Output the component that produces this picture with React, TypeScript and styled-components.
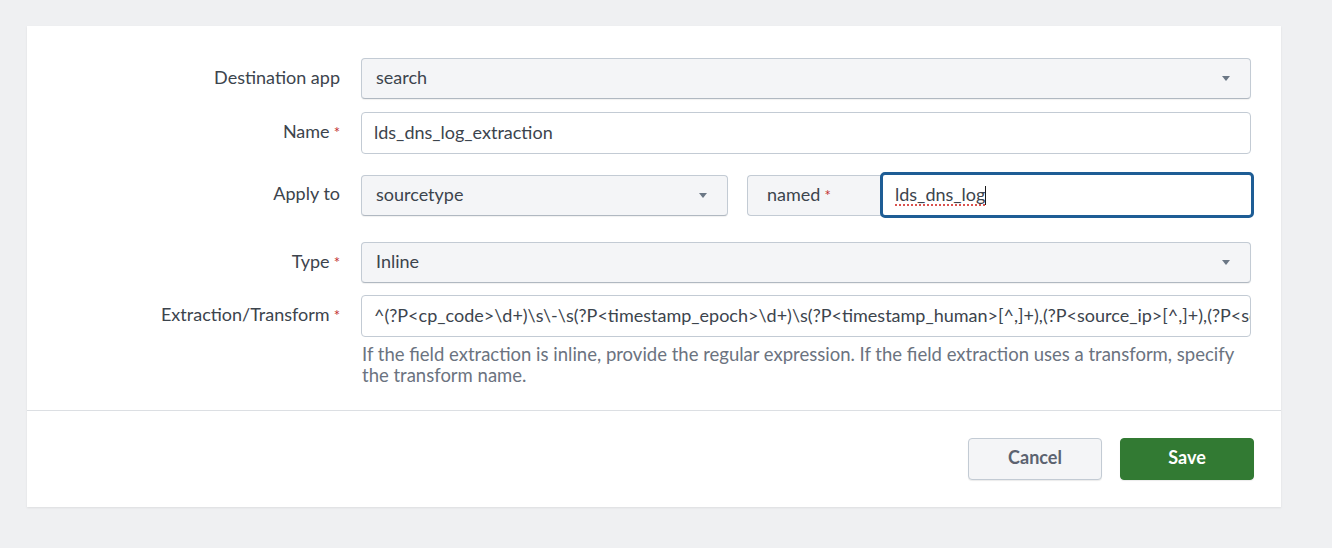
import styled, { createGlobalStyle } from 'styled-components'

const GlobalStyle = createGlobalStyle`
  html, body {
    margin: 0;
    padding: 0;
    background: #eff0f2;
    font-family: Lato, "Open Sans", "Liberation Sans", sans-serif;
    color: #3c444d;
  }
  * { box-sizing: border-box; }
`

const Page = styled.div`
  width: 1332px;
  height: 548px;
  padding: 26px 51px 0 27px;
`

const Card = styled.div`
  background: #fff;
  box-shadow: 0 1px 2px rgba(0, 0, 0, 0.08);
`

const Form = styled.div`
  padding: 32px 30px 0 0;
  height: 384px;
`

const Row = styled.div<{ $top?: number }>`
  display: grid;
  grid-template-columns: 313px minmax(0, 1fr);
  column-gap: 21px;
  align-items: start;
  margin-top: ${p => p.$top ?? 0}px;
`

const Label = styled.label<{ $offset?: number }>`
  text-align: right;
  font-size: 18px;
  line-height: 39px;
  padding-top: ${p => p.$offset ?? 0}px;
  color: #3c444d;
  white-space: nowrap;
`

const Req = styled.span`
  color: #c22f2f;
  margin-left: 4px;
  font-size: 15px;
`

const Select = styled.div<{ $width?: number }>`
  position: relative;
  height: 41px;
  width: ${p => (p.$width ? `${p.$width}px` : '100%')};
  background: #f4f5f7;
  border: 1px solid #c3cbd4;
  border-bottom-color: #b0b8c1;
  border-radius: 4px;
  padding: 0 14px;
  font-size: 18px;
  line-height: 36px;
  color: #3c444d;
  box-shadow: 0 1px 1px rgba(0, 0, 0, 0.06);
`

const Caret = styled.span`
  position: absolute;
  right: 20px;
  top: 17px;
  width: 0;
  height: 0;
  border-left: 4px solid transparent;
  border-right: 4px solid transparent;
  border-top: 5px solid #6b7785;
`

const Input = styled.div`
  height: 42px;
  width: 100%;
  min-width: 0;
  background: #fff;
  border: 1px solid #c3cbd4;
  border-radius: 4px;
  padding: 0 13px 0 12px;
  font-size: 18px;
  line-height: 38px;
  color: #3c444d;
  white-space: nowrap;
  overflow: hidden;
`

const ApplyGroup = styled.div`
  display: flex;
  align-items: center;
`

const NamedBox = styled.div`
  margin-left: 19px;
  height: 41px;
  width: 140px;
  background: #f4f5f7;
  border: 1px solid #c3cbd4;
  border-right: none;
  border-radius: 4px 0 0 4px;
  padding: 0 0 0 19px;
  font-size: 18px;
  line-height: 36px;
  color: #3c444d;
`

const FocusInput = styled.div`
  flex: 1;
  height: 46px;
  margin-right: -3px;
  margin-left: -7px;
  background: #fff;
  border: 3px solid #1e5d95;
  border-radius: 5px;
  padding: 0 12px;
  font-size: 18px;
  line-height: 38px;
  color: #3c444d;
`

const Misspelled = styled.span`
  text-decoration: underline dotted #d9534f;
  text-decoration-thickness: 2px;
  text-underline-offset: 3px;
`

const Cursor = styled.span`
  display: inline-block;
  width: 1px;
  height: 19px;
  background: #1a1a1a;
  vertical-align: -4px;
`

const Help = styled.div`
  margin-top: 7px;
  font-size: 18.5px;
  line-height: 21px;
  color: #6b7380;
  padding-left: 1px;
`

const Footer = styled.div`
  border-top: 1px solid #dcdfe3;
  height: 97px;
  display: flex;
  justify-content: flex-end;
  align-items: flex-start;
  padding: 27px 27px 0 0;
  gap: 18px;
`

const Button = styled.button<{ $primary?: boolean }>`
  width: 134px;
  height: 42px;
  padding: 0 0 4px;
  border-radius: 4px;
  font-family: Lato, "Open Sans", "Liberation Sans", sans-serif;
  font-weight: 700;
  font-size: 18px;
  cursor: pointer;
  background: ${p => (p.$primary ? '#327a33' : '#f4f5f7')};
  color: ${p => (p.$primary ? '#fff' : '#5c6370')};
  border: 1px solid ${p => (p.$primary ? '#327a33' : '#c3cbd4')};
  box-shadow: 0 1px 1px rgba(0, 0, 0, 0.08);
`

export default function App() {
  return (
    <Page>
      <GlobalStyle />
      <Card>
        <Form>
          <Row>
            <Label>Destination app</Label>
            <Select>
              search
              <Caret />
            </Select>
          </Row>
          <Row $top={13}>
            <Label>
              Name<Req>*</Req>
            </Label>
            <Input>lds_dns_log_extraction</Input>
          </Row>
          <Row $top={18}>
            <Label $offset={2}>Apply to</Label>
            <ApplyGroup>
              <Select $width={367}>
                sourcetype
                <Caret />
              </Select>
              <NamedBox>
                named<Req>*</Req>
              </NamedBox>
              <FocusInput>
                <Misspelled>lds_dns_log</Misspelled>
                <Cursor />
              </FocusInput>
            </ApplyGroup>
          </Row>
          <Row $top={24}>
            <Label>
              Type<Req>*</Req>
            </Label>
            <Select>
              Inline
              <Caret />
            </Select>
          </Row>
          <Row $top={12}>
            <Label>
              Extraction/Transform<Req>*</Req>
            </Label>
            <div>
              <Input>
                {'^(?P<cp_code>\\d+)\\s\\-\\s(?P<timestamp_epoch>\\d+)\\s(?P<timestamp_human>[^,]+),(?P<source_ip>[^,]+),(?P<source_port>[^,]+)'}
              </Input>
              <Help>
                If the field extraction is inline, provide the regular expression. If the field extraction uses a transform, specify the transform name.
              </Help>
            </div>
          </Row>
        </Form>
        <Footer>
          <Button>Cancel</Button>
          <Button $primary>Save</Button>
        </Footer>
      </Card>
    </Page>
  )
}
